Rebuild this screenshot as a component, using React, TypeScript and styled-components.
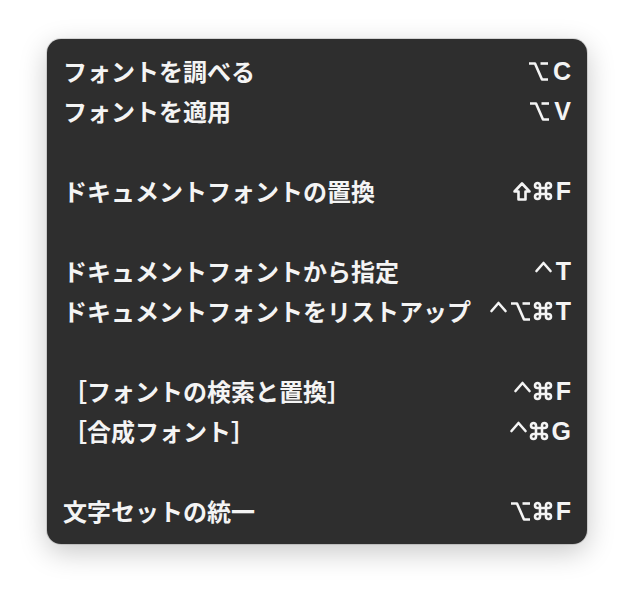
import styled, { createGlobalStyle } from 'styled-components';

const GlobalStyle = createGlobalStyle`
  html, body {
    margin: 0;
    background: #ffffff;
  }
`;

const Page = styled.div`
  padding: 39px 47px;
`;

const Menu = styled.div`
  width: 540px;
  box-sizing: border-box;
  padding: 12px 16px 13px 16px;
  background: #2e2e2e;
  border-radius: 14px;
  box-shadow: 0 0 0 1px rgba(0, 0, 0, 0.12), 0 8px 28px rgba(0, 0, 0, 0.22);
  color: #f4f4f4;
`;

const Row = styled.div`
  height: 40px;
  display: flex;
  align-items: center;
  justify-content: space-between;
`;

const Spacer = styled.div`
  height: 40px;
`;

const Label = styled.span`
  font-family: "Noto Sans CJK JP", sans-serif;
  font-weight: 700;
  font-size: 24px;
  line-height: 1;
  white-space: nowrap;
`;

const Shortcut = styled.span`
  display: inline-flex;
  align-items: center;
  gap: 3px;
  height: 20px;
`;

const KeyChar = styled.span`
  font-family: "Liberation Sans", sans-serif;
  font-weight: 700;
  font-size: 25px;
  line-height: 20px;
  margin-left: 1px;
`;

const Glyph = styled.svg<{ $top?: boolean }>`
  display: block;
  align-self: ${(p) => (p.$top ? 'flex-start' : 'center')};
  fill: none;
  stroke: #f4f4f4;
  stroke-width: 2.6;
  stroke-linecap: round;
  stroke-linejoin: round;
  overflow: visible;
`;

type Mod = 'ctrl' | 'opt' | 'cmd' | 'shift';

function ModKey({ mod }: { mod: Mod }) {
  switch (mod) {
    case 'ctrl':
      return (
        <Glyph $top width="17" height="11" viewBox="0 0 17 11">
          <polyline points="1.5,10 8.5,2 15.5,10" />
        </Glyph>
      );
    case 'opt':
      return (
        <Glyph width="21" height="19" viewBox="0 0 21 19">
          <polyline points="1,1.5 7,1.5 14,17.5 20,17.5" strokeLinecap="butt" />
          <line x1="12.5" y1="1.5" x2="20" y2="1.5" strokeLinecap="butt" />
        </Glyph>
      );
    case 'cmd':
      return (
        <Glyph width="18" height="18" viewBox="-0.5 -0.5 18 18">
          <path d="M5.5 5.5 V3 A2.5 2.5 0 1 0 3 5.5 H14 A2.5 2.5 0 1 0 11.5 3 V14 A2.5 2.5 0 1 0 14 11.5 H3 A2.5 2.5 0 1 0 5.5 14 Z" />
        </Glyph>
      );
    case 'shift':
      return (
        <Glyph width="18" height="19" viewBox="0 0 18 19">
          <polygon points="9,1.5 16.5,9.5 12.5,9.5 12.5,17.5 5.5,17.5 5.5,9.5 1.5,9.5" />
        </Glyph>
      );
  }
}

type Item = { label: string; mods: Mod[]; key: string } | null;

const items: Item[] = [
  { label: 'フォントを調べる', mods: ['opt'], key: 'C' },
  { label: 'フォントを適用', mods: ['opt'], key: 'V' },
  null,
  { label: 'ドキュメントフォントの置換', mods: ['shift', 'cmd'], key: 'F' },
  null,
  { label: 'ドキュメントフォントから指定', mods: ['ctrl'], key: 'T' },
  { label: 'ドキュメントフォントをリストアップ', mods: ['ctrl', 'opt', 'cmd'], key: 'T' },
  null,
  { label: '［フォントの検索と置換］', mods: ['ctrl', 'cmd'], key: 'F' },
  { label: '［合成フォント］', mods: ['ctrl', 'cmd'], key: 'G' },
  null,
  { label: '文字セットの統一', mods: ['opt', 'cmd'], key: 'F' },
];

export default function App() {
  return (
    <>
      <GlobalStyle />
      <Page>
        <Menu>
          {items.map((item, i) =>
            item ? (
              <Row key={i}>
                <Label>{item.label}</Label>
                <Shortcut>
                  {item.mods.map((m) => (
                    <ModKey key={m} mod={m} />
                  ))}
                  <KeyChar>{item.key}</KeyChar>
                </Shortcut>
              </Row>
            ) : (
              <Spacer key={i} />
            )
          )}
        </Menu>
      </Page>
    </>
  );
}
